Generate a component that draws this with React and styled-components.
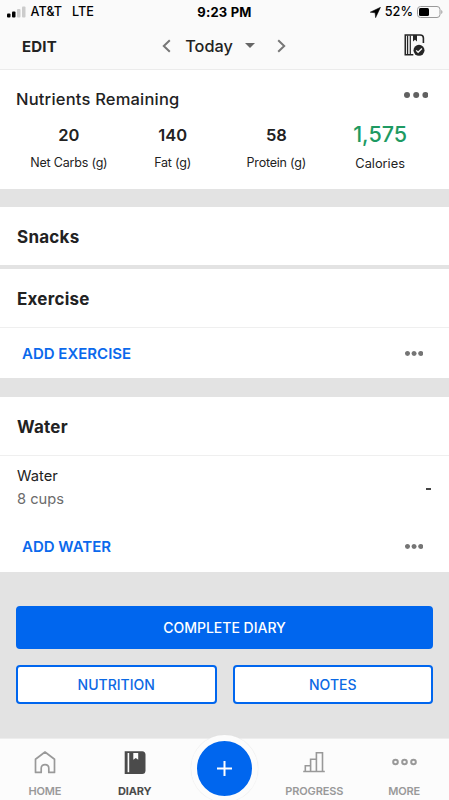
import React from "react";
import styled, { createGlobalStyle } from "styled-components";

const GlobalStyle = createGlobalStyle`
  * {
    box-sizing: border-box;
  }
  body {
    margin: 0;
    background: #e3e3e3;
    color: #222;
    font-family: Inter, "Liberation Sans", sans-serif;
  }
  button {
    font-family: inherit;
    padding: 0;
    border: none;
    background: none;
    cursor: pointer;
  }
  svg {
    display: block;
  }
`;

const Screen = styled.div`
  height: 800px;
  display: flex;
  flex-direction: column;
  background: #e3e3e3;
  overflow: hidden;
`;

const StatusBar = styled.div`
  height: 24px;
  display: grid;
  grid-template-columns: 1fr auto 1fr;
  align-items: center;
  padding: 0 7px;
  background: #fafafa;
  color: #000;
  font-size: 12.7px;
  line-height: 24px;
`;

const Carrier = styled.div`
  display: flex;
  align-items: center;
  font-weight: 500;
  span {
    margin-left: 4.5px;
  }
  span + span {
    margin-left: 10px;
  }
`;

const Clock = styled.div`
  font-weight: 700;
  font-size: 13px;
  letter-spacing: 0.2px;
`;

const Battery = styled.div`
  display: flex;
  justify-content: flex-end;
  align-items: center;
  gap: 4px;
  margin-right: -1px;
  font-weight: 500;
`;

const Header = styled.header`
  height: 46px;
  display: grid;
  grid-template-columns: 1fr auto 1fr;
  align-items: center;
  padding: 0 24px 0 22px;
  background: #fafafa;
  border-bottom: 1px solid #ebebeb;
`;

const EditButton = styled.button`
  justify-self: start;
  color: #222;
  font-size: 15px;
  font-weight: 700;
  letter-spacing: 0.2px;
`;

const DayPicker = styled.div`
  display: flex;
  align-items: center;
  margin: 0 0 2px 1px;
`;

const Day = styled.span`
  margin: 0 12.5px 0 14.5px;
  font-size: 16.3px;
  font-weight: 500;
`;

const DiaryCheck = styled.button`
  justify-self: end;
  margin-bottom: 3px;
`;

const Card = styled.section`
  background: #fff;
  margin-bottom: ${(p) => p.$gap}px;
`;

const SummaryHead = styled.div`
  display: flex;
  justify-content: space-between;
  height: 50px;
  padding: 19px 21px 0 16px;
  svg {
    margin-top: 3px;
  }
`;

const SummaryTitle = styled.h2`
  margin: 0;
  font-size: 16.5px;
  line-height: 20px;
  font-weight: 500;
  letter-spacing: 0.2px;
`;

const Nutrients = styled.div`
  display: grid;
  grid-template-columns: repeat(4, 1fr);
  height: 69px;
  padding: 0 17px;
  text-align: center;
`;

const Amount = styled.div`
  height: 31px;
  font-size: ${(p) => (p.$big ? 21.5 : 16.5)}px;
  line-height: ${(p) => (p.$big ? 28 : 30)}px;
  font-weight: ${(p) => (p.$big ? 550 : 600)};
  color: ${(p) => (p.$big ? "#1e9a62" : "#222")};
`;

const Unit = styled.div`
  padding-top: ${(p) => (p.$big ? 4 : 3)}px;
  font-size: ${(p) => (p.$big ? 12.8 : 12.5)}px;
  line-height: 17px;
  letter-spacing: ${(p) => (p.$big ? 0 : -0.2)}px;
  white-space: nowrap;
`;

const MealTitle = styled.h3`
  display: flex;
  align-items: center;
  height: 58px;
  margin: 0;
  padding: 2px 17px 0;
  font-size: 17px;
  font-weight: 700;
  letter-spacing: 0.25px;
`;

const AddRow = styled.div`
  display: flex;
  align-items: center;
  justify-content: space-between;
  height: 51px;
  padding: ${(p) => (p.$line ? "1px 26px 0 22px" : "0 26px 1px 22px")};
  border-top: ${(p) => (p.$line ? "1px solid #efefef" : "none")};
`;

const AddButton = styled.button`
  color: #0b69ec;
  font-size: 15px;
  font-weight: 600;
`;

const Entry = styled.div`
  display: flex;
  align-items: center;
  justify-content: space-between;
  height: 66px;
  padding: 0 18px 2px 17px;
  border-top: 1px solid #efefef;
  font-size: 14.7px;
  line-height: 23px;
`;

const Quantity = styled.div`
  color: #6b6b6b;
`;

const Dash = styled.span`
  width: 5px;
  height: 2px;
  margin-top: 3px;
  background: #444;
`;

const Actions = styled.div`
  flex: 1;
  display: grid;
  grid-template-columns: 1fr 1fr;
  grid-template-rows: 43px 39px;
  gap: 16px;
  padding: 34px 16px 0;
`;

const ActionButton = styled.button`
  grid-column: ${(p) => (p.$primary ? "1 / -1" : "auto")};
  border: 2px solid #0066ee;
  border-radius: 4px;
  background: ${(p) => (p.$primary ? "#0066ee" : "#fff")};
  color: ${(p) => (p.$primary ? "#fff" : "#0b69e4")};
  font-size: 14px;
  font-weight: 500;
`;

const TabBar = styled.nav`
  height: 62px;
  display: grid;
  grid-template-columns: repeat(5, 1fr);
  background: #fcfcfc;
  border-top: 1px solid #ededed;
`;

const Tab = styled.button`
  display: flex;
  flex-direction: column;
  align-items: center;
  padding-top: 11px;
  color: ${(p) => (p.$active ? "#4b4b4b" : "#999")};
  font-size: 11px;
  line-height: 14px;
  font-weight: ${(p) => (p.$active ? 700 : 600)};
  letter-spacing: -0.15px;
  svg {
    margin-bottom: 9px;
  }
`;

const AddFab = styled.button`
  justify-self: center;
  display: flex;
  align-items: center;
  justify-content: center;
  width: 67px;
  height: 67px;
  margin-top: -4px;
  border: 6px solid #fcfcfc;
  border-radius: 50%;
  background: #0066ee;
  box-shadow: 0 0 1px #d8d8d8;
`;

const Dots = ({ size, gap, color = "#616161" }) => {
  const w = size * 3 + gap * 2;
  return (
    <svg width={w} height={size} viewBox={`0 0 ${w} ${size}`} fill={color}>
      {[0, 1, 2].map((i) => (
        <circle key={i} cx={size / 2 + i * (size + gap)} cy={size / 2} r={size / 2} />
      ))}
    </svg>
  );
};

const SignalIcon = () => (
  <svg width="19" height="12" viewBox="0 0 19 12">
    <rect x="0" y="7.5" width="3.5" height="4" rx="1" />
    <rect x="5" y="5.5" width="3.5" height="6" rx="1" />
    <rect x="10" y="3" width="3.5" height="8.5" rx="1" fill="#ccc" />
    <rect x="15" y="0.5" width="3.5" height="11" rx="1" fill="#ccc" />
  </svg>
);

const LocationIcon = () => (
  <svg width="11" height="11" viewBox="0 0 11 11">
    <path d="M10.5 0.3 0.2 5.2l4.9.6.5 4.9z" stroke="#000" strokeWidth="0.5" />
  </svg>
);

const BatteryIcon = () => (
  <svg width="26" height="12" viewBox="0 0 26 12">
    <rect x="0.5" y="0.5" width="22.5" height="11" rx="3" fill="none" stroke="#999" />
    <rect x="2" y="2" width="10" height="8" rx="1.5" />
    <path d="M24.3 4v4c1.5-.6 1.5-3.4 0-4z" fill="#999" />
  </svg>
);

const Chevron = ({ right }) => (
  <svg width="9" height="14" viewBox="0 0 9 14" fill="none" stroke="#777" strokeWidth="2">
    <path d={right ? "M1.2 1.2 7.2 7l-6 5.8" : "M7.8 1.2 1.8 7l6 5.8"} />
  </svg>
);

const DiaryCheckIcon = () => (
  <svg width="21" height="22" viewBox="0 0 21 22" fill="none" stroke="#262626" strokeWidth="1.6">
    <path d="M9.3 20.7H1.3V1h14.9c2 0 3.2 1.2 3.2 3.1v5" />
    <path d="M3.6 1.5v19M6.3 1.5v19" strokeWidth="1.2" />
    <path d="M9 1v6.4l2-1.6 2 1.6V1z" fill="#262626" stroke="none" />
    <circle cx="15" cy="16.3" r="5.5" fill="#262626" stroke="none" />
    <path d="m12.2 16.4 1.9 1.9 3.8-3.8" stroke="#fafafa" strokeWidth="1.3" />
  </svg>
);

const HomeIcon = () => (
  <svg width="22" height="25" viewBox="0 0 22 25" fill="none" stroke="#999" strokeWidth="1.7" strokeLinejoin="round">
    <path d="M1.5 9.2 11 2l9.5 7.2v13.2h-5.7v-4.2c0-4.9-7.6-4.9-7.6 0v4.2H1.5z" />
  </svg>
);

const DiaryIcon = () => (
  <svg width="22" height="25" viewBox="0 0 22 25">
    <path d="M.7 1.2h17.5c2 0 3.3 1.3 3.3 3.3v16.2c0 2-1.3 3.3-3.3 3.3H.7z" fill="#4b4b4b" />
    <path d="M4.4 3v19.2" stroke="#fcfcfc" strokeWidth="1.6" />
    <path d="M9.3 3h4.9v6.8l-2.4-1.9-2.5 1.9z" fill="#fcfcfc" />
  </svg>
);

const ProgressIcon = () => (
  <svg width="22" height="25" viewBox="0 0 22 25" fill="none" stroke="#999" strokeWidth="1.6">
    <path d="M.2 21.5h21.6M2.3 21v-5.3h5.3V21M7.6 16V9.2h5.8M13.4 21V2.8h6.1V21M7.6 21v-5" />
  </svg>
);

const MoreIcon = () => (
  <svg width="25" height="25" viewBox="0 0 25 25" fill="none" stroke="#999" strokeWidth="2">
    <circle cx="3.5" cy="12" r="2.3" />
    <circle cx="12.5" cy="12" r="2.3" />
    <circle cx="21.5" cy="12" r="2.3" />
  </svg>
);

const nutrients = [
  { amount: "20", unit: "Net Carbs (g)" },
  { amount: "140", unit: "Fat (g)" },
  { amount: "58", unit: "Protein (g)" },
  { amount: "1,575", unit: "Calories", big: true },
];

export default function App() {
  return (
    <Screen>
      <GlobalStyle />
      <StatusBar>
        <Carrier>
          <SignalIcon />
          <span>AT&amp;T</span>
          <span>LTE</span>
        </Carrier>
        <Clock>9:23 PM</Clock>
        <Battery>
          <LocationIcon />
          52%
          <BatteryIcon />
        </Battery>
      </StatusBar>

      <Header>
        <EditButton>EDIT</EditButton>
        <DayPicker>
          <Chevron />
          <Day>Today</Day>
          <svg width="10" height="5" viewBox="0 0 10 5" fill="#666">
            <path d="M0 0h10L5 5z" />
          </svg>
          <svg width="22" height="1" />
          <Chevron right />
        </DayPicker>
        <DiaryCheck>
          <DiaryCheckIcon />
        </DiaryCheck>
      </Header>

      <Card $gap={18}>
        <SummaryHead>
          <SummaryTitle>Nutrients Remaining</SummaryTitle>
          <Dots size={6} gap={3.2} />
        </SummaryHead>
        <Nutrients>
          {nutrients.map((n) => (
            <div key={n.unit}>
              <Amount $big={n.big}>{n.amount}</Amount>
              <Unit $big={n.big}>{n.unit}</Unit>
            </div>
          ))}
        </Nutrients>
      </Card>

      <Card $gap={4}>
        <MealTitle>Snacks</MealTitle>
      </Card>

      <Card $gap={19}>
        <MealTitle>Exercise</MealTitle>
        <AddRow $line>
          <AddButton>ADD EXERCISE</AddButton>
          <Dots size={5} gap={1.6} color="#757575" />
        </AddRow>
      </Card>

      <Card $gap={0}>
        <MealTitle>Water</MealTitle>
        <Entry>
          <div>
            Water
            <Quantity>8 cups</Quantity>
          </div>
          <Dash />
        </Entry>
        <AddRow>
          <AddButton>ADD WATER</AddButton>
          <Dots size={5} gap={1.6} color="#757575" />
        </AddRow>
      </Card>

      <Actions>
        <ActionButton $primary>COMPLETE DIARY</ActionButton>
        <ActionButton>NUTRITION</ActionButton>
        <ActionButton>NOTES</ActionButton>
      </Actions>

      <TabBar>
        <Tab>
          <HomeIcon />
          HOME
        </Tab>
        <Tab $active>
          <DiaryIcon />
          DIARY
        </Tab>
        <AddFab>
          <svg width="15" height="15" viewBox="0 0 15 15" stroke="#fff" strokeWidth="2">
            <path d="M7.5 0v15M0 7.5h15" />
          </svg>
        </AddFab>
        <Tab>
          <ProgressIcon />
          PROGRESS
        </Tab>
        <Tab>
          <MoreIcon />
          MORE
        </Tab>
      </TabBar>
    </Screen>
  );
}
